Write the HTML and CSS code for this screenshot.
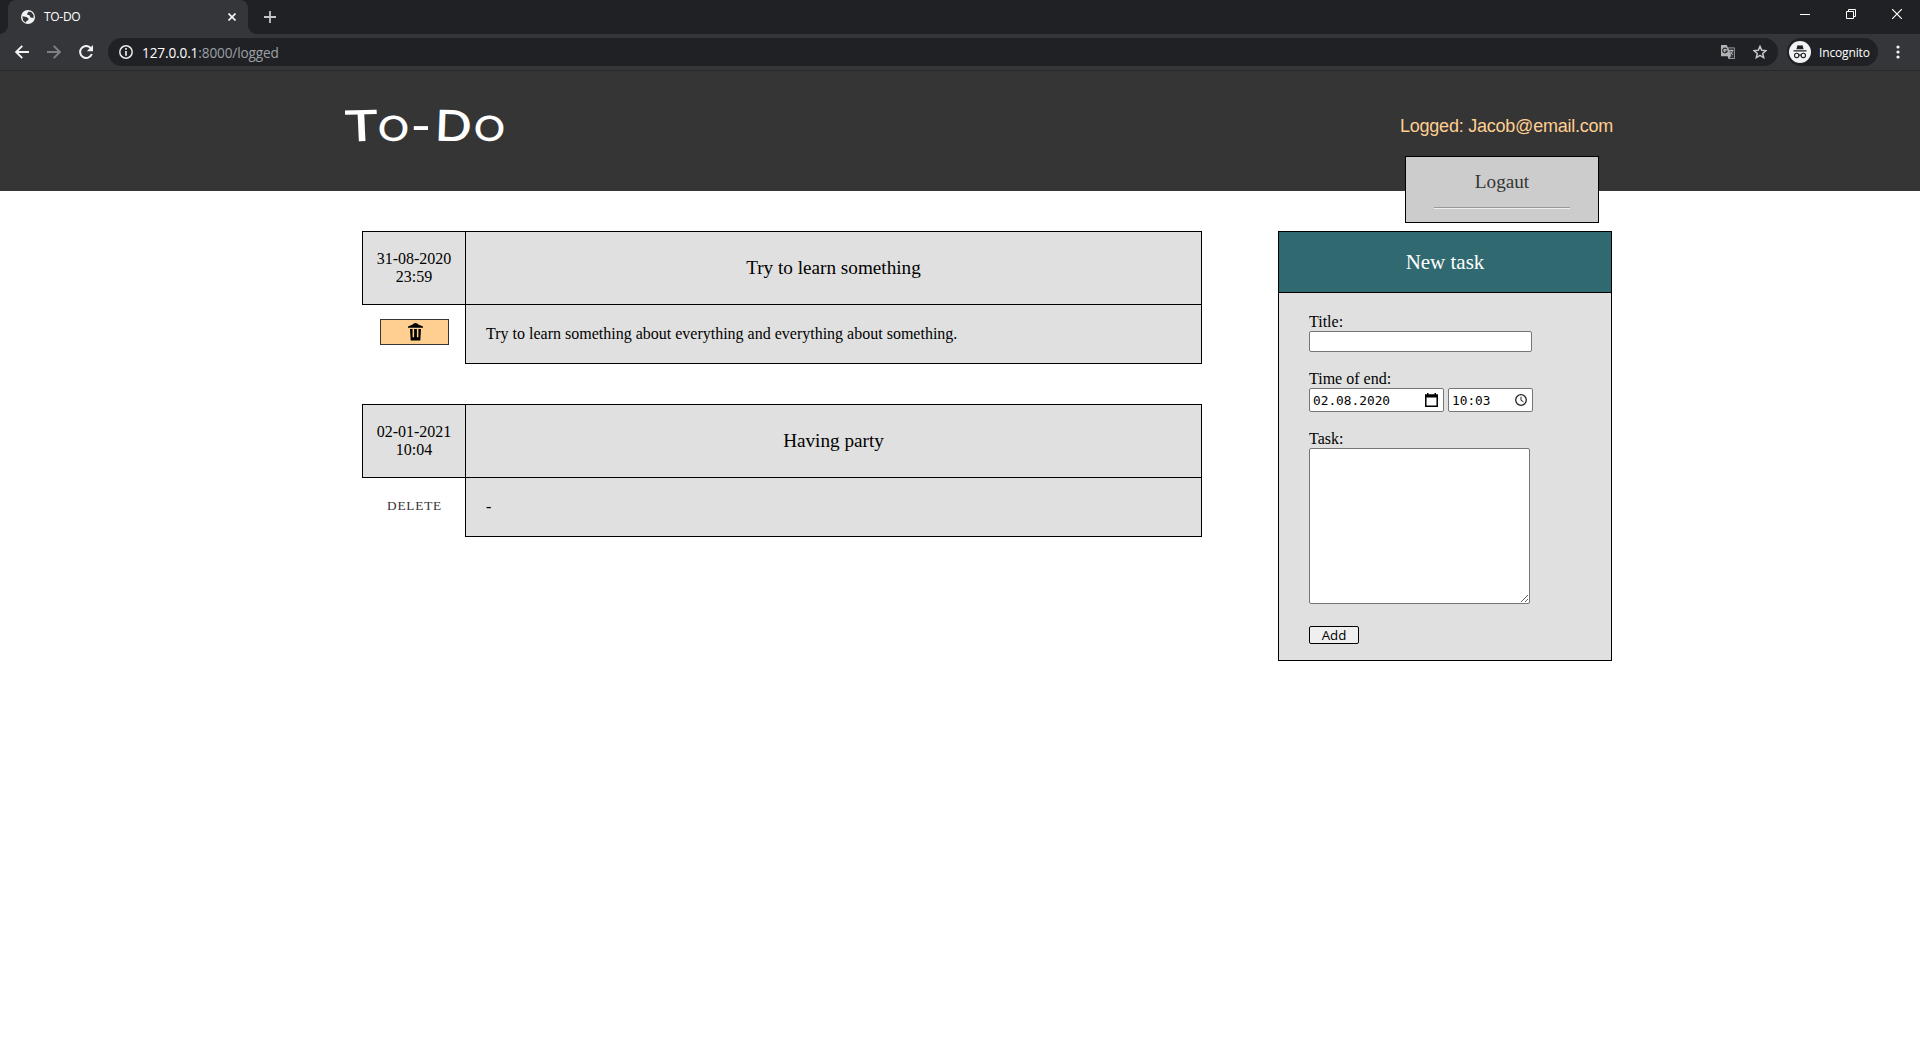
FILE: index.html
```html
<!DOCTYPE html>
<html lang="en">
<head>
<meta charset="utf-8">
<title>TO-DO</title>
<link rel="stylesheet" href="styles.css">
</head>
<body>
<div class="browser">
  <div class="tabstrip">
    <div class="tab">
      <svg width="14" height="14" viewBox="0 0 14 14"><circle cx="7" cy="7" r="7" fill="#f1f3f4"/><path d="M7.6 1.5 10.5 2.3 12.6 5 12.5 8 9.5 7.4 8.5 5.2 5.8 4.6 6.6 3z M1.3 6.2 5.4 7 7.8 8.8 6.9 10.6 5.4 11 5 12.7 2.2 10.7z" fill="#35363a"/></svg>
      <span class="tab-title">TO-DO</span>
      <svg width="8" height="8" viewBox="0 0 8 8"><path d="M.5.5l7 7M7.5.5l-7 7" stroke="#f1f3f4" stroke-width="1.7"/></svg>
    </div>
    <svg class="plus" width="12" height="12" viewBox="0 0 12 12"><path d="M6 0v12M0 6h12" stroke="#c4c7c9" stroke-width="1.8"/></svg>
    <div class="window-controls">
      <svg width="10" height="10" viewBox="0 0 10 10"><path d="M0 5.5h10" stroke="#fff"/></svg>
      <svg width="10" height="10" viewBox="0 0 10 10" fill="none" stroke="#fff"><path d="M.5 2.5h7v7h-7zM2.5 2.5v-2h7v7h-2"/></svg>
      <svg width="10" height="10" viewBox="0 0 10 10"><path d="M0 0l10 10M10 0L0 10" stroke="#fff" stroke-width="1.2"/></svg>
    </div>
  </div>
  <div class="toolbar">
    <svg width="14" height="14" viewBox="0 0 14 14" fill="none" stroke="#f1f3f4" stroke-width="1.9"><path d="M14 7H1.5M7.3.8L1.1 7l6.2 6.2"/></svg>
    <svg width="14" height="14" viewBox="0 0 14 14" fill="none" stroke="#808184" stroke-width="1.9"><path d="M0 7h12.5M6.7.8L12.9 7l-6.2 6.2"/></svg>
    <svg width="14" height="14" viewBox="0 0 14 14"><path d="M11.8 3.2A6 6 0 1 0 12.8 9" fill="none" stroke="#f1f3f4" stroke-width="2"/><path d="M14 0v6.2H7.8z" fill="#f1f3f4"/></svg>
    <div class="omnibox">
      <svg width="14" height="14" viewBox="0 0 14 14"><circle cx="7" cy="7" r="6.2" fill="none" stroke="#e8eaed" stroke-width="1.5"/><path d="M7 3v1.8M7 6v4.7" stroke="#e8eaed" stroke-width="1.7"/></svg>
      <span class="url"><b>127.0.0.1</b>:8000/logged</span>
      <svg width="14" height="14" viewBox="0 0 14 14"><path d="M0 0h5.8l1 2.5H13.7V14H7.4L6.7 11.2H0z" fill="#b1b3b5"/><path d="M7.4 3.3h5.6v9.9H8l2.1-2.2z" fill="#35363a"/><path d="M5.9 4.2A2.3 2.3 0 1 0 6.2 6H4.2" stroke="#292a2d" stroke-width="1.2" fill="none"/><path d="M8 5.5h4.4M10.2 4.6v1M8.8 6.3l3 3.7M11.6 5.7Q11 8.4 8.8 9.5" stroke="#b1b3b5" fill="none"/></svg>
      <svg class="star" width="14" height="14" viewBox="0 0 14 14"><path d="M7 1.3l1.7 3.9 4.3.4-3.3 2.8 1 4.2L7 10.4l-3.7 2.2 1-4.2L1 5.6l4.3-.4z" fill="none" stroke="#c4c7c9" stroke-width="1.5"/></svg>
    </div>
    <div class="incognito">
      <svg width="22" height="22" viewBox="0 0 22 22"><circle cx="11" cy="11" r="11" fill="#f1f3f4"/><path d="M7.4 8.3l1-3.7q.2-.6.8-.4 1.8.6 3.6 0 .6-.2.8.4l1 3.7zM4.5 9.3h13v1.3h-13z" fill="#202124"/><g fill="none" stroke="#202124" stroke-width="1.1"><circle cx="7.7" cy="14.4" r="2.2"/><circle cx="14.3" cy="14.4" r="2.2"/><path d="M9.9 14.3q1.1-.8 2.2 0"/></g></svg>
      <span>Incognito</span>
    </div>
    <svg class="more" width="4" height="14" viewBox="0 0 4 14" fill="#f1f3f4"><circle cx="2" cy="2" r="1.6"/><circle cx="2" cy="7" r="1.6"/><circle cx="2" cy="12" r="1.6"/></svg>
  </div>
</div>
<header class="site-header">
  <h1 class="logo"><span class="glyph tee">T</span><span class="glyph low">O</span><span class="glyph dash">-</span><span class="glyph dee">D</span><span class="glyph low">O</span></h1>
  <div class="account">
    <div class="logged">Logged: Jacob@email.com</div>
    <div class="logout">Logaut<hr></div>
  </div>
</header>
<main class="content">
  <section class="tasks">
    <article class="task">
      <div class="when">31-08-2020<br>23:59</div>
      <h2 class="name">Try to learn something</h2>
      <div class="action"><button class="trash" aria-label="Delete"><svg width="15" height="18" viewBox="0 0 15 18"><path d="M0 4.8V3.5L4.7 1.5Q5.5 0 7.5 0t2.8 1.5L15 3.5v1.3zM2 6h2.6v8.3h1.5V6h2.8v8.3h1.5V6H13l-.7 11.5H2.7z"/></svg></button></div>
      <p class="detail">Try to learn something about everything and everything about something.</p>
    </article>
    <article class="task">
      <div class="when">02-01-2021<br>10:04</div>
      <h2 class="name">Having party</h2>
      <div class="action"><span class="delete">DELETE</span></div>
      <p class="detail">-</p>
    </article>
  </section>
  <form class="new-task">
    <h2 class="form-title">New task</h2>
    <div class="fields">
      <label>Title:</label>
      <input class="field title-field" type="text">
      <label>Time of end:</label>
      <div class="time-row">
        <div class="field date">02.08.2020<svg width="13" height="14" viewBox="0 0 13 14"><path d="M.8 2.3h11.4v10.9H.8z" fill="none" stroke="#000" stroke-width="1.5"/><path d="M0 1.5h13v3H0zM2 0h1.5v2H2zM9.5 0H11v2H9.5z"/></svg></div>
        <div class="field time">10:03<svg width="12" height="12" viewBox="0 0 12 12" fill="none" stroke="#222"><circle cx="6" cy="6" r="5.3" stroke-width="1.3"/><path d="M6 2.8v3.5l2.5 1.5"/></svg></div>
      </div>
      <label>Task:</label>
      <textarea class="field"></textarea>
      <button class="add" type="button">Add</button>
    </div>
  </form>
</main>
</body>
</html>
```
FILE: styles.css
```css
* { box-sizing: border-box; }
body { margin: 0; height: 1040px; overflow: hidden; background: #fff; color: #000; font-family: "Liberation Serif", serif; font-size: 16px; }
svg { display: block; flex: none; }
.browser { height: 71px; background: #35363a; border-bottom: 1px solid #2a2a2c; font-family: "Open Sans", sans-serif; color: #fff; }
.tabstrip { display: flex; height: 34px; background: #202124; padding-left: 8px; }
.tab { position: relative; display: flex; align-items: center; width: 240px; padding: 0 12px 0 13px; background: #35363a; border-radius: 8px 8px 0 0; font-size: 12px; }
.tab::before, .tab::after { content: ""; position: absolute; bottom: 0; width: 8px; height: 8px; }
.tab::before { left: -8px; background: radial-gradient(circle at 0 0, #202124 7.5px, #35363a 8px); }
.tab::after { right: -8px; background: radial-gradient(circle at 100% 0, #202124 7.5px, #35363a 8px); }
.tab-title { margin: -1px 0 0 9px; flex: 1; letter-spacing: -.3px; }
.plus { margin: 11px 0 0 16px; }
.window-controls { display: flex; gap: 36px; margin: 9px 18px 0 auto; }
.toolbar { display: flex; align-items: center; height: 36px; padding: 0 20px 0 15px; }
.toolbar > svg { margin-right: 18px; }
.toolbar > svg:nth-child(3) { margin-right: 15px; }
.omnibox { display: flex; align-items: center; flex: 1; height: 28px; padding: 0 11px; border-radius: 14px; background: #202124; font-size: 13.6px; }
.url { flex: 1; margin-left: 9px; color: #9aa0a6; letter-spacing: -.12px; }
.url b { color: #fff; font-weight: 400; }
.star { margin-left: 18px; }
.incognito { display: flex; align-items: center; width: 91px; height: 28px; margin-left: 9px; padding-left: 2px; border-radius: 14px; background: #202124; font-size: 12px; }
.incognito span { margin-left: 8px; letter-spacing: -.15px; }
.toolbar > .more { margin: 0 0 0 18px; }
.site-header { display: flex; justify-content: space-between; height: 120px; padding: 0 305px 0 345px; background: #353535; }
.logo { display: flex; align-items: baseline; margin: 29px 0 0; height: 50px; color: #fff; font: 600 43px/50px Lato, sans-serif; }
.glyph { text-align: center; }
.tee { width: 33px; transform: scaleX(1.3) rotate(-2deg); }
.low { width: 31px; font-size: 35px; transform: scaleX(1.1) rotate(3deg); }
.dash { width: 24px; transform: scaleX(1.3); }
.dee { width: 41px; transform: scaleX(1.12) rotate(2deg); }
.account { width: 220px; position: relative; z-index: 1; }
.logged { margin: 44px 0 0 5px; height: 22px; color: #ffcf91; font: 18px/22px "Liberation Sans", sans-serif; letter-spacing: -.23px; white-space: nowrap; }
.logout { width: 194px; height: 67px; margin: 19px 0 0 10px; padding-top: 13px; border: 1px solid #000; background: #ccc; color: #353535; font-size: 19.2px; line-height: 24px; text-align: center; }
.logout hr { width: 136px; height: 2px; margin: 13px auto 0; border: 0; border-top: 1px solid #999; border-bottom: 1px solid #eee; }
.content { display: flex; justify-content: space-between; padding: 40px 308px 0 362px; }
.tasks { display: flex; flex-direction: column; gap: 40px; width: 840px; }
.task { display: grid; grid-template-columns: 103px 737px; grid-template-rows: 73px 60px; }
.when { margin-right: -1px; margin-bottom: -1px; padding-top: 18px; border: 1px solid #000; background: #e0e0e0; line-height: 18px; text-align: center; }
.name { margin: 0 0 -1px; border: 1px solid #000; background: #e0e0e0; font-size: 19.2px; font-weight: 400; line-height: 72px; text-align: center; }
.detail { margin: 0; padding-left: 20px; border: 1px solid #000; background: #e0e0e0; font-size: 16px; line-height: 58px; }
.action { display: flex; justify-content: center; padding: 15px 0 0 2px; }
.trash { display: flex; align-items: center; justify-content: center; width: 69px; height: 26px; padding: 0 0 0 2px; border: 1px solid #353535; background: #ffcf91; }
.trash svg { margin-top: -1px; }
.delete { padding-top: 5px; color: #353535; font-size: 13.3px; line-height: 17px; letter-spacing: .8px; }
.new-task { width: 334px; height: 430px; border: 1px solid #000; background: #e0e0e0; }
.form-title { height: 61px; margin: 0; border-bottom: 1px solid #000; background: #306a70; color: #fff; font-size: 21px; font-weight: 400; line-height: 60px; text-align: center; }
.fields { display: flex; flex-direction: column; align-items: flex-start; padding: 20px 0 0 30px; }
label { height: 18px; line-height: 18px; }
.field { border: 1px solid #767676; border-radius: 2px; background: #fff; }
.title-field { width: 223px; height: 21px; margin-bottom: 18px; }
.time-row { display: flex; gap: 4px; margin-bottom: 18px; }
.date, .time { display: flex; align-items: center; justify-content: space-between; height: 24px; padding: 0 5px 0 3px; font: 12.8px "DejaVu Sans Mono", monospace; }
.date { width: 135px; }
.time { width: 85px; }
textarea { width: 221px; height: 156px; margin-bottom: 22px; }
.add { width: 50px; height: 18px; padding: 0; border: 1px solid #000; border-radius: 2px; background: #efefef; color: #000; font: 13.3px/16px "Open Sans", sans-serif; }
```
